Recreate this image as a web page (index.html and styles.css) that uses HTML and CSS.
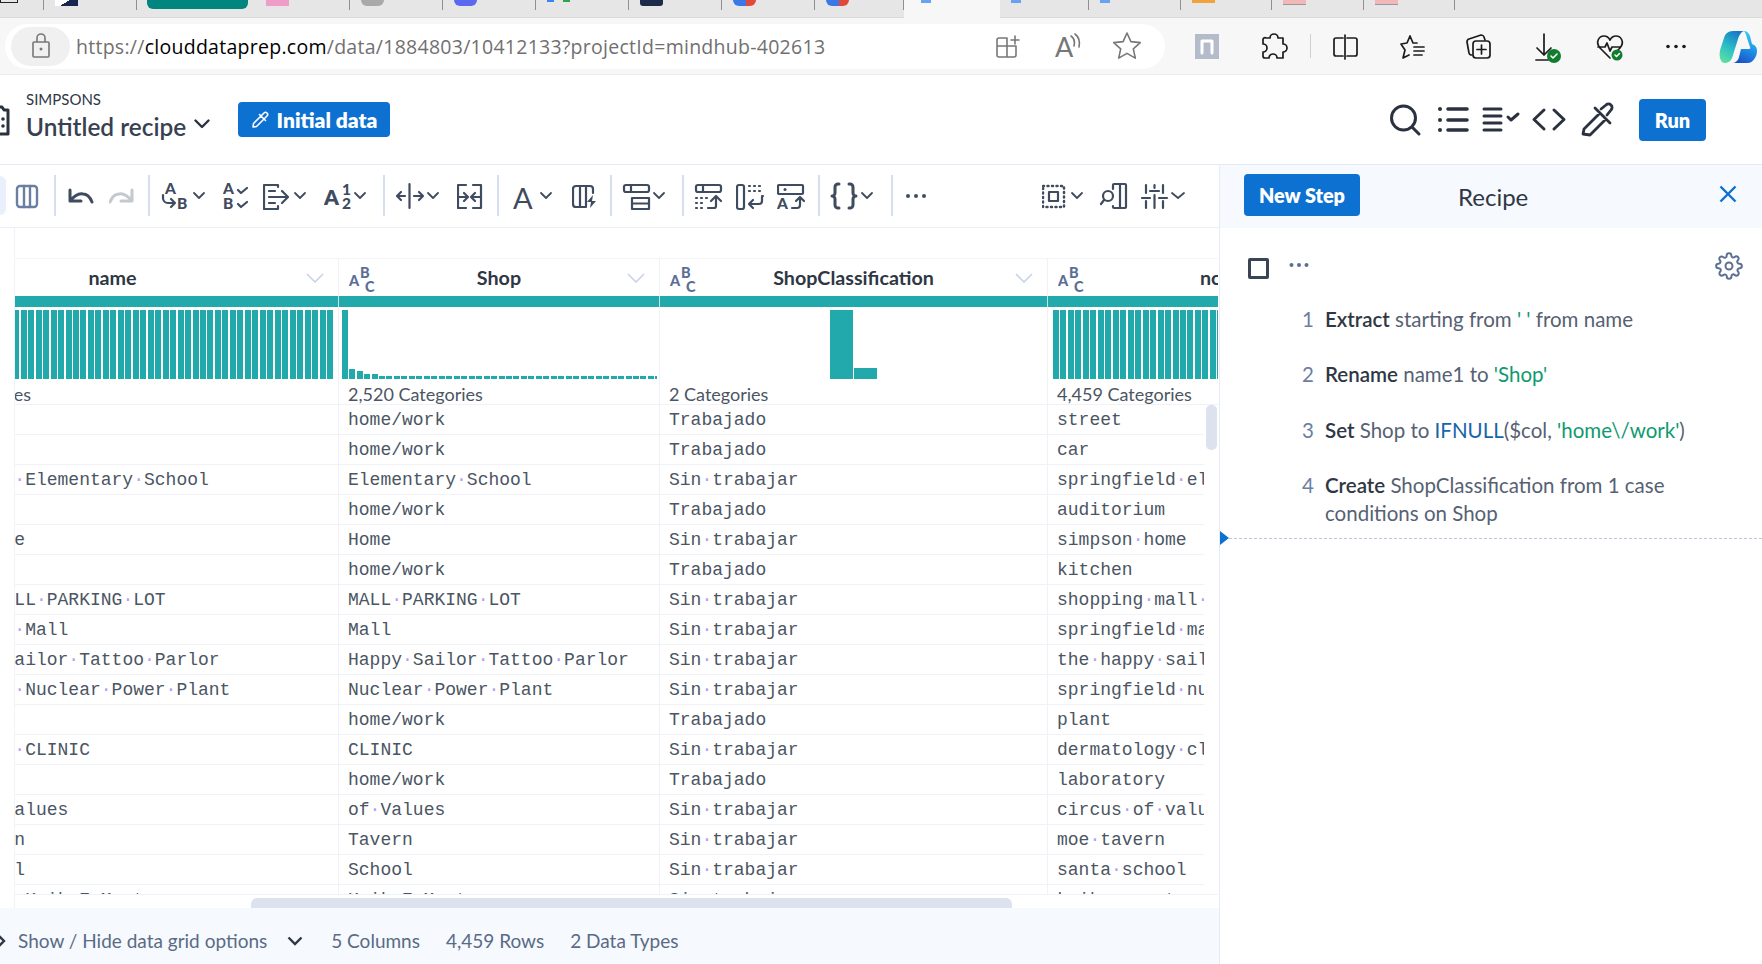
FILE: index.html
```html
<!DOCTYPE html>
<html lang="en">
<head>
<meta charset="utf-8">
<title>Untitled recipe</title>
<link rel="stylesheet" href="styles.css">
</head>
<body>
<div class="tabs">
  <div class="tab w44"><span class="fav f-black"></span></div>
  <div class="tab w93"><span class="fav f-navy"></span></div>
  <div class="tab w213"><span class="pill"></span><span class="fav f-pink"></span></div>
  <div class="tab w93"><span class="fav f-grey"></span></div>
  <div class="tab w93"><span class="fav f-blue"></span></div>
  <div class="tab w93"><span class="fav f-dots"></span></div>
  <div class="tab w93"><span class="fav f-dark"></span></div>
  <div class="tab w93"><span class="fav f-goog"></span></div>
  <div class="tab w89"><span class="fav f-goog"></span></div>
  <div class="tab active"><span class="fav f-tiny"></span></div>
  <div class="tab w89"><span class="fav f-tiny"></span></div>
  <div class="tab w92"><span class="fav f-tiny"></span></div>
  <div class="tab w91"><span class="fav f-orange"></span></div>
  <div class="tab w92"><span class="fav f-rose"></span></div>
  <div class="tab w91"><span class="fav f-rose"></span></div>
</div>

<div class="browser">
  <div class="address">
    <span class="lock">
      <svg width="20" height="26" viewBox="0 0 20 26"><path class="s-g" d="M6 9V5a4 4 0 0 1 8 0v4M3 9h14a1 1 0 0 1 1 1v13a1 1 0 0 1-1 1H3a1 1 0 0 1-1-1V10a1 1 0 0 1 1-1z"/><circle class="f-g" cx="10" cy="16" r="1.5"/></svg>
    </span>
    <span class="url">https://<b>clouddataprep.com</b>/data/1884803/10412133?projectId=mindhub-402613</span>
    <svg class="push" width="55" height="45" viewBox="995 24 55 45"><path class="s-g" d="M1007 38h-8a2 2 0 0 0-2 2v15a2 2 0 0 0 2 2h15a2 2 0 0 0 2-2v-9h-19M1007 38v19M1015 36v8M1011 40h8"/></svg>
    <svg width="55" height="45" viewBox="1050 24 55 45"><text class="t-read" x="1055" y="57">A</text><path class="s-g" d="M1071 36c3 2 4 6 3 10M1075 34c4 3 5 8 4 13"/></svg>
    <svg width="55" height="45" viewBox="1105 24 55 45"><path class="s-g" d="M1127 33l3.9 8.6 9.4 1-7 6.3 2 9.2-8.3-4.7-8.3 4.7 2-9.2-7-6.3 9.4-1z"/></svg>
  </div>
  <svg class="b-ic" width="60" height="57" viewBox="1190 18 60 57"><rect class="f-tile" x="1195" y="34" width="24" height="25"/><path class="s-w" d="M1202 53V41h10v12"/></svg>
  <svg class="b-ic" width="60" height="57" viewBox="1250 18 60 57"><path class="s-k" d="M1266 38h4a4 4 0 0 1 8 0h5v6a4 4 0 0 1 0 8v6h-6a4 4 0 0 0-8 0h-4a2 2 0 0 1-2-2v-4a4 4 0 0 0 0-8v-4a2 2 0 0 1 3-2z"/></svg>
  <span class="b-sep"></span>
  <svg class="b-ic" width="64" height="57" viewBox="1311 18 64 57"><path class="s-k" d="M1343 38h-7a2 2 0 0 0-2 2v14a2 2 0 0 0 2 2h7M1347 38h8a2 2 0 0 1 2 2v14a2 2 0 0 1-2 2h-8M1345 35v24"/></svg>
  <svg class="b-ic" width="70" height="57" viewBox="1375 18 70 57"><path class="s-k" d="M1410 36l3 7h4M1410 36l-3 7-6 1 4 6-2 8 6-3M1414 47h10M1414 51h10M1414 55h8"/></svg>
  <svg class="b-ic" width="70" height="57" viewBox="1445 18 70 57"><path class="s-k" d="M1472 55h-1a3 3 0 0 1-2-2l-2-11a3 3 0 0 1 2-3l12-4a3 3 0 0 1 3 2l1 3"/><rect class="s-k" x="1473" y="41" width="17" height="17" rx="3"/><path class="s-k" d="M1481.5 45v9M1477 49.500h9"/></svg>
  <svg class="b-ic" width="65" height="57" viewBox="1515 18 65 57"><path class="s-k" d="M1544 34v21M1537 48l7 7 7-7M1536 60h12"/><circle class="f-green" cx="1554" cy="56" r="7"/><path class="s-w1" d="M1551 56l2 2 4-4"/></svg>
  <svg class="b-ic" width="65" height="57" viewBox="1580 18 65 57"><path class="s-k" d="M1610 58l-10-10c-5-6-1-12 4-12 3 0 5 2 6 4 1-2 3-4 6-4 5 0 9 6 4 12l-2 2M1598 47h7l2-4 3 8 2-4h8"/><circle class="f-green" cx="1617" cy="55" r="5.500"/><path class="s-w1" d="M1615 55l1.500 1.500 3-3"/></svg>
  <svg class="b-ic" width="65" height="57" viewBox="1645 18 65 57"><circle class="f-k" cx="1668" cy="46.500" r="1.800"/><circle class="f-k" cx="1676" cy="46.500" r="1.800"/><circle class="f-k" cx="1684" cy="46.500" r="1.800"/></svg>
  <svg class="b-ic" width="52" height="57" viewBox="1710 18 52 57">
    <defs>
      <linearGradient id="cpa" x1="0.2" y1="1" x2="0.7" y2="0"><stop offset="0" stop-color="#5fe0a0"/><stop offset=".45" stop-color="#2cc0c4"/><stop offset="1" stop-color="#1678c8"/></linearGradient>
      <linearGradient id="cpb" x1="0.3" y1="1" x2="0.7" y2="0"><stop offset="0" stop-color="#1a4fc8"/><stop offset=".5" stop-color="#1f90e6"/><stop offset="1" stop-color="#3ed0ee"/></linearGradient>
    </defs>
    <path fill="url(#cpa)" d="M1733 31h11c-3 1-5 4-6 8l-5 16c-1 5-4 8-8 8-3 0-4-2-5-5-1-4 0-8 1-11l3-9c1-4 4-7 9-7z"/>
    <path fill="url(#cpb)" d="M1744 31c3 0 5 2 6 5l2 8c3 1 5 3 5 7 0 3-1 5-2 7-2 3-4 5-8 5h-15c3 0 6-2 7-6l2-8h8c1 0 2-1 1-2l-3-9c-1-4-2-6-3-7z"/>
  </svg>
</div>

<header class="app-head">
  <svg class="doc" width="23" height="32" viewBox="-13 105 23 32"><path class="s-h3" d="M-10 110h4l2-3h6l2 3h4v24h-18z"/><circle class="f-h" cx="3" cy="119" r="1.800"/><circle class="f-h" cx="3" cy="126" r="1.800"/></svg>
  <div class="title">
    <div class="proj">SIMPSONS</div>
    <div class="recipe">Untitled recipe<svg width="16" height="10" viewBox="0 0 16 10"><path class="s-h" d="M1.500 1.500l6.500 6.500 6.500-6.500"/></svg></div>
  </div>
  <button class="btn initial"><svg width="18" height="18" viewBox="0 0 18 18"><path class="s-w1" d="M2 16l.500-3.500L10 5l3 3-7.500 7.500zM8.500 3.500l6 6M10.500 4.500l2.500-2.500a2 2 0 0 1 3 3l-2.500 2.500"/></svg>Initial data</button>
  <div class="head-icons">
    <svg width="48" height="40" viewBox="1385 100 48 40"><circle class="s-h3" cx="1403.500" cy="118" r="12"/><path class="s-h3" d="M1412 127l7 7"/></svg>
    <svg width="45" height="40" viewBox="1433 100 45 40"><path class="s-h4" d="M1448 109h19M1448 120h19M1448 130h19"/><circle class="f-h" cx="1440" cy="109" r="2"/><circle class="f-h" cx="1440" cy="120" r="2"/><circle class="f-h" cx="1440" cy="130" r="2"/></svg>
    <svg width="50" height="40" viewBox="1478 100 50 40"><path class="s-h3" d="M1484 109h17M1484 116h17M1484 123h17M1484 130h17"/><path class="s-h3" d="M1508 117l3 3 7-6"/></svg>
    <svg width="50" height="40" viewBox="1528 100 50 40"><path class="s-h3" d="M1544 110l-10 9.500 10 9.500M1554 110l10 9.500-10 9.500"/></svg>
    <svg width="61" height="40" viewBox="1578 100 61 40"><path class="s-h25" d="M1583 134l1-5 16-16 6 6-16 16zM1595 108l15 15M1601 109l5-4a3.500 3.500 0 0 1 5 5l-4 5"/></svg>
    <button class="btn run">Run</button>
  </div>
</header>

<main class="content">
  <section class="left">
    <div class="toolbar">
      <span class="active-pill"></span>
      <svg width="48" height="40" viewBox="6 176 48 40"><rect class="s-soft" x="17" y="186" width="20" height="21" rx="3"/><path class="s-soft" d="M24 186v21M30 186v21"/></svg>
      <span class="sep"></span>
      <svg width="53" height="40" viewBox="56 176 53 40"><path class="s-t3" d="M70 190v11h11M70 201c5-6 9-8 13-7 4 0 7 3 9 8"/></svg>
      <svg width="39" height="40" viewBox="109 176 39 40"><path class="s-off" d="M132 190v11h-11M132 201c-5-6-9-8-13-7-4 0-7 3-9 8"/></svg>
      <span class="sep"></span>
      <svg width="73" height="40" viewBox="150 176 73 40"><text class="t-b13" x="165" y="194">A</text><text class="t-b13" x="177" y="209">B</text><path class="s-t" d="M163 195v3a5 5 0 0 0 5 5h7M171 199l4 4-4 4"/><path class="chev" d="M194 193l5 5 5-5"/></svg>
      <svg width="40" height="40" viewBox="223 176 40 40"><text class="t-b13" x="223" y="194">A</text><text class="t-b13" x="223" y="209">B</text><path class="s-t" d="M238 190l3 3 6-5M238 204l3 3 6-5"/></svg>
      <svg width="61" height="40" viewBox="263 176 61 40"><path class="s-t" d="M278 187v-2h-14v24h14v-3M269 191h6M269 203h6M269 197h18M282 191l6 6-6 6"/><path class="chev" d="M295 193l5 5 5-5"/></svg>
      <svg width="59" height="40" viewBox="324 176 59 40"><text class="t-b20" x="324" y="205">A</text><text class="t-b14" x="342" y="195">1</text><text class="t-b14" x="342" y="209">2</text><path class="chev" d="M355 193l5 5 5-5"/></svg>
      <span class="sep"></span>
      <svg width="72" height="40" viewBox="385 176 72 40"><path class="s-t" d="M409.500 184v24M405 196h-8M401 192l-4 4 4 4M414 196h9M419 192l4 4-4 4"/><path class="chev" d="M428 193l5 5 5-5"/></svg>
      <svg width="40" height="40" viewBox="457 176 40 40"><path class="s-t" d="M466 185h-8v23h8M473 185h8v23h-8M459 197h9M464 193l4 4-4 4M480 197h-9M475 193l-4 4 4 4"/></svg>
      <span class="sep"></span>
      <svg width="73" height="40" viewBox="499 176 73 40"><text class="t-a" x="513" y="209">A</text><path class="chev" d="M541 193l5 5 5-5"/></svg>
      <svg width="38" height="40" viewBox="572 176 38 40"><path class="s-t" d="M590 186h-14a3 3 0 0 0-3 3v15a3 3 0 0 0 3 3h10M580 186v21M586 186v21M590 186a3 3 0 0 1 3 3v4"/><path class="f-t" d="M593 195l-6 7h4l-1 6 6-7h-4z"/></svg>
      <span class="sep"></span>
      <svg width="70" height="40" viewBox="612 176 70 40"><rect class="s-t" x="624" y="185" width="25" height="7" rx="2"/><path class="s-t" d="M631 185v7M632 198h17v11h-17zM632 203.500h17"/><path class="chev" d="M654 193l5 5 5-5"/></svg>
      <span class="sep"></span>
      <svg width="52" height="40" viewBox="684 176 52 40"><rect class="s-t" x="696" y="185" width="25" height="7" rx="2"/><path class="s-t" d="M703 185v7M708 208h6a2 2 0 0 0 2-2v-9M711 201l5-5 5 5"/><path class="dots" d="M696 198h12M696 203h8M696 208h8"/></svg>
      <svg width="41" height="40" viewBox="736 176 41 40"><rect class="s-t" x="737" y="185" width="7" height="24" rx="2"/><path class="dots" d="M749 186h14M749 191h14M762 196h1"/><path class="s-t" d="M762 197v4a3 3 0 0 1-3 3h-10M753 200l-4 4 4 4"/></svg>
      <svg width="41" height="40" viewBox="777 176 41 40"><rect class="s-t" x="778" y="185" width="25" height="9" rx="1"/><circle class="f-t" cx="785" cy="189.500" r="1.500"/><text class="t-b13" x="777" y="209">A</text><path class="s-t" d="M792 208h5a3 3 0 0 0 3-3v-6M796 201l4-4 4 4"/></svg>
      <span class="sep"></span>
      <svg width="71" height="40" viewBox="820 176 71 40"><path class="s-t3" d="M839 184h-1a3 3 0 0 0-3 3v6a3 3 0 0 1-3 3 3 3 0 0 1 3 3v6a3 3 0 0 0 3 3h1M849 184h1a3 3 0 0 1 3 3v6a3 3 0 0 0 3 3 3 3 0 0 0-3 3v6a3 3 0 0 1-3 3h-1"/><path class="chev" d="M862 193l5 5 5-5"/></svg>
      <span class="sep"></span>
      <svg width="149" height="40" viewBox="893 176 149 40"><circle class="f-t" cx="908" cy="196" r="2"/><circle class="f-t" cx="916" cy="196" r="2"/><circle class="f-t" cx="924" cy="196" r="2"/></svg>
      <svg width="58" height="40" viewBox="1042 176 58 40"><rect class="dash" x="1043" y="186" width="21" height="21"/><rect class="s-t" x="1049" y="192" width="9" height="9"/><path class="chev" d="M1072 193l5 5 5-5"/></svg>
      <svg width="41" height="40" viewBox="1100 176 41 40"><circle class="s-t" cx="1108" cy="196" r="5"/><path class="s-t" d="M1104 200l-3 4M1113 189v-4a1 1 0 0 1 1-1h11a1 1 0 0 1 1 1v22a1 1 0 0 1-1 1h-11a1 1 0 0 1-1-1v-1M1120 184v24"/></svg>
      <svg width="50" height="40" viewBox="1141 176 50 40"><path class="s-t" d="M1146 185v8M1146 201v7M1142 198h8M1154.500 185v3M1154.500 195v13M1150 191h9M1163 185v8M1163 201v7M1159 198h8"/><path class="chev" d="M1172 193l6 5 6-5"/></svg>
    </div>

    <div class="grid">
      <div class="viewport">
        <div class="row head">
          <div class="hcell"><svg class="abc" width="28" height="26" viewBox="0 0 28 26"><text x="0" y="19">A</text><text x="11" y="11">B</text><text x="16" y="25">C</text></svg><span class="hname">name</span><svg class="hchev" width="18" height="10" viewBox="0 0 18 10"><path d="M1 1l8 8 8-8"/></svg></div>
          <div class="hcell"><svg class="abc" width="28" height="26" viewBox="0 0 28 26"><text x="0" y="19">A</text><text x="11" y="11">B</text><text x="16" y="25">C</text></svg><span class="hname">Shop</span><svg class="hchev" width="18" height="10" viewBox="0 0 18 10"><path d="M1 1l8 8 8-8"/></svg></div>
          <div class="hcell"><svg class="abc" width="28" height="26" viewBox="0 0 28 26"><text x="0" y="19">A</text><text x="11" y="11">B</text><text x="16" y="25">C</text></svg><span class="hname">ShopClassification</span><svg class="hchev" width="18" height="10" viewBox="0 0 18 10"><path d="M1 1l8 8 8-8"/></svg></div>
          <div class="hcell"><svg class="abc" width="28" height="26" viewBox="0 0 28 26"><text x="0" y="19">A</text><text x="11" y="11">B</text><text x="16" y="25">C</text></svg><span class="hname">normalized_name</span><svg class="hchev" width="18" height="10" viewBox="0 0 18 10"><path d="M1 1l8 8 8-8"/></svg></div>
        </div>
        <div class="row teal"><div></div><div></div><div></div><div></div></div>
        <div class="row stats">
          <div class="stat"><div class="hist bars-left"></div><div class="cat">4,459 Categories</div></div>
          <div class="stat"><div class="hist shop"><i style="height:69px"></i><i style="height:10px"></i><i style="height:8px"></i><i style="height:5px"></i><i style="height:5px"></i><span class="tail"></span></div><div class="cat">2,520 Categories</div></div>
          <div class="stat"><div class="hist two"><i style="height:69px"></i><i style="height:11px"></i></div><div class="cat">2 Categories</div></div>
          <div class="stat"><div class="hist bars-right"></div><div class="cat">4,459 Categories</div></div>
        </div>
        <div class="body">
          <div class="row"><div>street</div><div>home/work</div><div>Trabajado</div><div>street</div></div>
          <div class="row"><div>car</div><div>home/work</div><div>Trabajado</div><div>car</div></div>
          <div class="row"><div>Springfield<i>·</i>Elementary<i>·</i>School</div><div>Elementary<i>·</i>School</div><div>Sin<i>·</i>trabajar</div><div>springfield<i>·</i>elementary</div></div>
          <div class="row"><div>auditorium</div><div>home/work</div><div>Trabajado</div><div>auditorium</div></div>
          <div class="row"><div>Simpson<i>·</i>Home</div><div>Home</div><div>Sin<i>·</i>trabajar</div><div>simpson<i>·</i>home</div></div>
          <div class="row"><div>kitchen</div><div>home/work</div><div>Trabajado</div><div>kitchen</div></div>
          <div class="row"><div>SHOPPING<i>·</i>MALL<i>·</i>PARKING<i>·</i>LOT</div><div>MALL<i>·</i>PARKING<i>·</i>LOT</div><div>Sin<i>·</i>trabajar</div><div>shopping<i>·</i>mall<i>·</i>parking</div></div>
          <div class="row"><div>Springfield<i>·</i>Mall</div><div>Mall</div><div>Sin<i>·</i>trabajar</div><div>springfield<i>·</i>mall</div></div>
          <div class="row"><div>The<i>·</i>Happy<i>·</i>Sailor<i>·</i>Tattoo<i>·</i>Parlor</div><div>Happy<i>·</i>Sailor<i>·</i>Tattoo<i>·</i>Parlor</div><div>Sin<i>·</i>trabajar</div><div>the<i>·</i>happy<i>·</i>sailor</div></div>
          <div class="row"><div>Springfield<i>·</i>Nuclear<i>·</i>Power<i>·</i>Plant</div><div>Nuclear<i>·</i>Power<i>·</i>Plant</div><div>Sin<i>·</i>trabajar</div><div>springfield<i>·</i>nuclear</div></div>
          <div class="row"><div>plant</div><div>home/work</div><div>Trabajado</div><div>plant</div></div>
          <div class="row"><div>Dermatology<i>·</i>CLINIC</div><div>CLINIC</div><div>Sin<i>·</i>trabajar</div><div>dermatology<i>·</i>clinic</div></div>
          <div class="row"><div>laboratory</div><div>home/work</div><div>Trabajado</div><div>laboratory</div></div>
          <div class="row"><div>Circus<i>·</i>of<i>·</i>Values</div><div>of<i>·</i>Values</div><div>Sin<i>·</i>trabajar</div><div>circus<i>·</i>of<i>·</i>values</div></div>
          <div class="row"><div>Moe's<i>·</i>Tavern</div><div>Tavern</div><div>Sin<i>·</i>trabajar</div><div>moe<i>·</i>tavern</div></div>
          <div class="row"><div>Santa<i>·</i>School</div><div>School</div><div>Sin<i>·</i>trabajar</div><div>santa<i>·</i>school</div></div>
          <div class="row"><div>Springfield<i>·</i>Kwik-E-Mart</div><div>Kwik-E-Mart</div><div>Sin<i>·</i>trabajar</div><div>kwik-e-mart</div></div>
        </div>
        <div class="hscroll"><span class="hthumb"></span></div>
      </div>
      <span class="vthumb"></span>
    </div>

    <footer class="foot">
      <svg class="foot-l" width="18" height="16" viewBox="0 0 18 16"><path d="M-2 2l6 6-6 6"/></svg>
      <span>Show / Hide data grid options</span>
      <svg class="foot-c" width="16" height="10" viewBox="0 0 16 10"><path d="M1.500 1.500l6.500 6.500 6.500-6.500"/></svg>
      <span>5 Columns</span>
      <span class="m2">4,459 Rows</span>
      <span class="m2">2 Data Types</span>
    </footer>
  </section>

  <aside class="right">
    <div class="r-head">
      <button class="btn newstep">New Step</button>
      <span class="r-title">Recipe</span>
      <svg class="r-x" width="18" height="18" viewBox="0 0 18 18"><path d="M1.500 1.500l15 15M16.500 1.500l-15 15"/></svg>
    </div>
    <div class="r-tools">
      <span class="check"></span>
      <svg class="r-dots" width="20" height="6" viewBox="0 0 20 6"><circle cx="2.500" cy="3" r="2"/><circle cx="10" cy="3" r="2"/><circle cx="17.500" cy="3" r="2"/></svg>
      <svg class="gear" width="28" height="28" viewBox="0 0 24 24"><circle cx="12" cy="12" r="3"/><path d="M19.400 15a1.650 1.650 0 0 0 .33 1.820l.06.06a2 2 0 1 1-2.830 2.830l-.06-.06a1.650 1.650 0 0 0-2.820 1.170V21a2 2 0 1 1-4 0v-.09A1.650 1.650 0 0 0 7.280 19.700l-.06.06a2 2 0 1 1-2.830-2.830l.06-.06A1.650 1.650 0 0 0 3.280 14H3a2 2 0 1 1 0-4h.09A1.650 1.650 0 0 0 4.300 7.280l-.06-.06a2 2 0 1 1 2.830-2.830l.06.06A1.650 1.650 0 0 0 10 3.280V3a2 2 0 1 1 4 0v.09a1.650 1.650 0 0 0 2.780 1.200l.06-.06a2 2 0 1 1 2.830 2.830l-.06.06A1.650 1.650 0 0 0 20.720 10H21a2 2 0 1 1 0 4h-.09a1.650 1.650 0 0 0-1.510 1z"/></svg>
    </div>
    <ol class="steps">
      <li><span class="n">1</span><span><b>Extract</b> starting from <em>' '</em> from name</span></li>
      <li><span class="n">2</span><span><b>Rename</b> name1 to <em>'Shop'</em></span></li>
      <li><span class="n">3</span><span><b>Set</b> Shop to <u>IFNULL</u>($col, <em>'home\/work'</em>)</span></li>
      <li><span class="n">4</span><span><b>Create</b> ShopClassification from 1 case conditions on Shop</span></li>
    </ol>
    <div class="insert"><span class="tri"></span><span class="dashline"></span></div>
  </aside>
</main>
</body>
</html>
```

FILE: styles.css
```css
* { box-sizing: border-box; }
html, body { margin: 0; padding: 0; }
body { width: 1762px; height: 964px; overflow: hidden; background: #fff; font-family: Lato, "Liberation Sans", sans-serif; color: #2f3744; }
svg { display: block; flex: none; }
button { border: 0; font-family: inherit; cursor: pointer; }

/* browser tab strip */
.tabs { display: flex; align-items: flex-start; height: 18px; background: #e6e6e6; border-bottom: 1px solid #dadada; }
.tab { display: flex; align-items: flex-start; height: 10px; padding-left: 11px; border-right: 1px solid #8f8f8f; flex: none; }
.w44 { width: 44px; padding-left: 0; }
.w93 { width: 93px; }
.w213 { width: 213px; padding-left: 10px; }
.w89 { width: 89px; }
.w92 { width: 92px; }
.w91 { width: 91px; }
.tab.active { width: 96px; height: 18px; background: #f7f7f7; border: 0; padding-left: 17px; }
.pill { width: 101px; height: 9px; background: #00857f; border-radius: 0 0 6px 6px; margin-right: 18px; }
.fav { display: block; width: 23px; height: 6px; }
.f-black { width: 18px; height: 3px; border: 1px solid #222; border-top: 0; }
.f-navy { background: linear-gradient(150deg, #fff 0 45%, #16264f 45%); }
.f-pink { background: #ee9cc8; }
.f-grey { background: #a9a9a9; border-radius: 0 0 12px 12px; }
.f-blue { background: #5b68f0; border-radius: 0 0 12px 12px; }
.f-dots { height: 2px; background: linear-gradient(90deg, #3b82f6 0 30%, transparent 30% 70%, #2ea44f 70%); }
.f-dark { background: #1d2b4a; border-radius: 0 0 3px 3px; }
.f-goog { background: linear-gradient(90deg, #3b78e7 0 55%, #e3493b 55%); border-radius: 0 0 10px 10px; }
.f-tiny { width: 10px; height: 3px; background: #6aa2f2; }
.f-orange { height: 3px; background: #f0a33a; }
.f-rose { height: 5px; background: #f2b8b8; border-bottom: 1px solid #999; }

/* browser toolbar */
.browser { display: flex; align-items: center; height: 57px; background: #f7f7f7; border-bottom: 1px solid #ececec; }
.address { display: flex; align-items: center; width: 1160px; height: 45px; margin: 0 25px 0 5px; padding-right: 5px; background: #fff; border-radius: 23px; }
.lock { display: flex; align-items: center; justify-content: center; width: 59px; height: 39px; margin: 0 6px; background: #f0f0f0; border-radius: 20px; }
.url { font: 19.500px "Open Sans", sans-serif; letter-spacing: 0.27px; color: #707070; white-space: nowrap; }
.url b { font-weight: 400; color: #000; }
.push { margin-left: auto; }
.b-sep { width: 1px; height: 24px; background: #cfcfcf; flex: none; }
.b-ic { overflow: visible; }
.s-g, .s-k, .s-w, .s-w1 { fill: none; stroke-linecap: round; stroke-linejoin: round; }
.s-g { stroke: #777; stroke-width: 1.600; }
.s-k { stroke: #1c1c1c; stroke-width: 1.700; }
.s-w { stroke: #fff; stroke-width: 3; }
.s-w1 { stroke: #fff; stroke-width: 1.600; }
.f-g { fill: #777; }
.f-k { fill: #1c1c1c; }
.f-tile { fill: #b4bccb; }
.f-green { fill: #107c2e; }
.t-read { font: 400 27px Lato, sans-serif; fill: #777; }

/* application header */
.app-head { display: flex; align-items: center; height: 90px; border-bottom: 1px solid #e4ebf5; background: #fff; border-radius: 0 8px 0 0; }
.doc { margin: 3px 16px 0 -13px; overflow: hidden; }
.title { margin-top: -5px; width: 212px; }
.proj { font-size: 15px; line-height: 17px; color: #2f3744; }
.recipe { display: flex; align-items: center; gap: 8px; margin-top: 2px; font-size: 24.400px; line-height: 34px; font-weight: 600; color: #374151; }
.recipe svg { margin-top: -6px; }
.btn { display: flex; align-items: center; justify-content: center; background: #0c71d0; color: #fff; border-radius: 4px; font-weight: 800; }
.initial { gap: 8px; width: 152px; height: 35px; font-size: 21px; }
.head-icons { display: flex; align-items: center; margin-left: auto; margin-right: 56px; }
.run { width: 67px; height: 42px; font-size: 20px; }
.s-h, .s-h3, .s-h4, .s-h25 { fill: none; stroke: #2a3240; stroke-linecap: round; stroke-linejoin: round; }
.s-h { stroke-width: 2.400; }
.s-h3 { stroke-width: 3; }
.s-h4 { stroke-width: 3.600; }
.s-h25 { stroke-width: 2.800; }
.f-h { fill: #2a3240; }

/* main split */
.content { display: flex; height: 799px; }
.left { width: 1219px; flex: none; display: flex; flex-direction: column; }
.right { flex: 1; border-left: 1px solid #e6ecf5; }

/* tool strip */
.toolbar { display: flex; align-items: center; height: 63px; border-bottom: 1px solid #e9eff5; padding-bottom: 1px; }
.active-pill { width: 6px; height: 39px; background: #e9f0fb; border-radius: 0 6px 6px 0; flex: none; }
.sep { width: 2px; height: 41px; background: #d5dff0; flex: none; }
.s-t, .s-t3, .s-off, .s-soft, .chev, .dots, .dash { fill: none; stroke-linecap: round; stroke-linejoin: round; }
.s-t { stroke: #3f4b5f; stroke-width: 2.200; }
.s-t3 { stroke: #3f4b5f; stroke-width: 3; }
.s-off { stroke: #c4c9cf; stroke-width: 3; }
.s-soft { stroke: #6b7fa3; stroke-width: 2.400; }
.chev { stroke: #3f4b5f; stroke-width: 1.800; }
.dots { stroke: #3f4b5f; stroke-width: 2.200; stroke-dasharray: 1 4; }
.dash { stroke: #3f4b5f; stroke-width: 2.500; stroke-dasharray: 1 3.500; }
.f-t { fill: #3f4b5f; }
.t-b13 { font: 900 15.500px Lato, sans-serif; fill: #3f4b5f; }
.t-b14 { font: 900 15.500px Lato, sans-serif; fill: #3f4b5f; }
.t-b20 { font: 800 21px Lato, sans-serif; fill: #3f4b5f; }
.t-a { font: 400 29px Lato, sans-serif; fill: #3f4b5f; }

/* data grid */
.grid { flex: 1; margin-left: 14px; position: relative; min-height: 0; }
.viewport { width: 1204px; height: 100%; padding-top: 30px; overflow: hidden; border-left: 1px solid #eff2f7; }
.row { display: grid; grid-template-columns: 452px 321px 388px 459px; margin-left: -128px; width: 1620px; }
.row > div { border-right: 1px solid #f0f2f7; }
.head { height: 38px; border-top: 1px solid #f3f5f8; }
.hcell { display: grid; grid-template-columns: 1fr auto 1fr; align-items: center; padding: 0 14px; }
.abc { justify-self: start; margin: 4px 0 0 -4px; }
.abc text { font: 900 14.500px Lato, sans-serif; fill: #5b6e96; }
.hname { font-size: 19.700px; font-weight: 700; color: #2f3744; margin-top: -1px; }
.hchev { justify-self: end; }
.hchev path { fill: none; stroke: #c9d3e6; stroke-width: 1.600; }
.teal { height: 11px; background: #22a9ab; }
.teal > div { border-right: 1px solid #c4e3e4; }
.stats { height: 98px; }
.stat { overflow: hidden; border-bottom: 1px solid #f0f2f7; padding-top: 3px; }
.hist { height: 69px; display: flex; align-items: flex-end; }
.bars-left { margin-right: 5px; background: repeating-linear-gradient(to left, #22a9ab 0 6px, #fff 6px 7.470px); }
.bars-right { margin-left: 5px; background: repeating-linear-gradient(to right, #22a9ab 0 6px, #fff 6px 7.470px); }
.shop { gap: 1.470px; padding: 0 2px 0 3px; }
.shop i { display: block; width: 6px; background: #22a9ab; flex: none; }
.tail { display: block; flex: 1; height: 3px; background: repeating-linear-gradient(to right, #22a9ab 0 6px, #fff 6px 7.470px); }
.two { justify-content: center; gap: 1.200px; }
.two i { display: block; width: 23px; background: #22a9ab; }
.cat { font-size: 18px; line-height: 20px; padding: 5px 0 0 9px; color: #4b5563; white-space: nowrap; }
.stat:first-child .cat { text-align: right; padding-right: 307px; padding-left: 0; }
.body { width: 1189px; height: 489px; overflow: hidden; }
.body .row { height: 30px; }
.body .row > div { font: 18px/29px "Liberation Mono", monospace; color: #4b5563; padding: 1px 0 0 9px; border-bottom: 1px solid #f0f2f7; white-space: nowrap; overflow: hidden; }
.body .row > div:first-child { padding-left: 8.500px; }
.body i { font-style: normal; color: #b79cf5; }
.hscroll { height: 15px; padding: 3px 0 0 236px; border-top: 1px solid #eff2f7; }
.hthumb { display: block; width: 761px; height: 12px; background: #dce3ef; border-radius: 6px 6px 0 0; }
.vthumb { position: absolute; left: 1191.500px; top: 177px; width: 11px; height: 45px; background: #dce3ef; border-radius: 5px; }

/* bottom bar */
.foot { display: flex; align-items: center; height: 56px; padding-top: 9px; background: #f6f9fe; font-size: 19px; color: #5a6b85; white-space: nowrap; }
.foot-l path, .foot-c path { fill: none; stroke: #2f3744; stroke-width: 2.400; }
.foot-c { margin: 0 28px 0 20px; }
.m2 { margin-left: 26px; }

/* recipe panel */
.r-head { display: flex; align-items: center; height: 63px; background: #f6f9fe; padding: 0 0 0 24px; }
.newstep { width: 116px; height: 42px; font-size: 19.800px; margin-top: -4px; }
.r-title { margin-left: 98px; font-size: 24px; color: #2f3744; }
.r-x { margin: -6px 25px 0 auto; }
.r-x path { fill: none; stroke: #0c71d0; stroke-width: 2.400; }
.r-tools { display: flex; align-items: flex-start; padding: 24px 19px 0 28px; }
.check { display: block; width: 21px; height: 21px; margin-top: 6px; border: 3px solid #3a4454; border-radius: 2px; }
.r-dots { margin: 10px 0 0 20px; fill: #5c6f93; }
.gear { margin-left: auto; fill: none; stroke: #5c6f93; stroke-width: 1.700; }
.steps { list-style: none; margin: 24.500px 0 0; padding: 0 20px 0 82px; }
.steps li { display: flex; gap: 13px; font-size: 20.500px; line-height: 28px; color: #566173; margin-bottom: 27.500px; }
.steps li:last-child { margin-bottom: 0; }
.n { width: 10px; flex: none; text-align: right; color: #6b7fa3; font-weight: 400; }
.steps b { font-weight: 600; color: #2f3744; }
.steps em { font-style: normal; color: #0e9a6f; }
.steps u { text-decoration: none; color: #1565a8; }
.insert { display: flex; align-items: center; height: 14px; margin-top: 4px; }
.tri { width: 0; height: 0; border-left: 9px solid #0c71d0; border-top: 7px solid transparent; border-bottom: 7px solid transparent; }
.dashline { flex: 1; border-top: 1px dashed #bcc8de; }
```
